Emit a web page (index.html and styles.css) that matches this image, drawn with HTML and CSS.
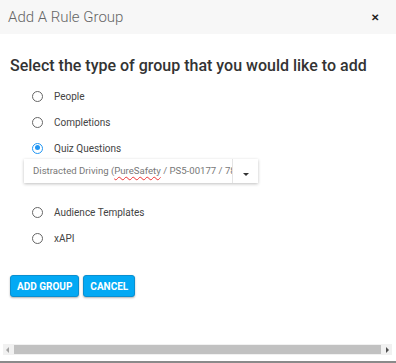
FILE: index.html
```html
<!DOCTYPE html>
<html lang="en">

<head>
    <meta charset="UTF-8">
    <meta name="viewport" content="width=device-width, initial-scale=1.0">
    <title>Add A Rule Group</title>
    <link rel="stylesheet" href="styles.css">
</head>

<body>
    <div class="dialog">
        <div class="dialog-head">
            <span class="dialog-title">Add A Rule Group</span>
            <span class="close">&#10005;</span>
        </div>
        <div class="dialog-body">
            <h2 class="question">Select the type of group that you would like to add</h2>
            <ul class="options">
                <li class="option"><span class="radio"></span>People</li>
                <li class="option"><span class="radio"></span>Completions</li>
                <li class="option"><span class="radio checked"></span>Quiz Questions</li>
            </ul>
            <div class="picker">
                <div class="picker-value">Distracted Driving (<span class="typo">PureSafety</span> / PS5-00177 / 78</div>
                <div class="picker-toggle"><span class="caret"></span></div>
            </div>
            <ul class="options lower">
                <li class="option"><span class="radio"></span>Audience Templates</li>
                <li class="option"><span class="radio"></span>xAPI</li>
            </ul>
            <div class="actions">
                <button class="btn">ADD GROUP</button>
                <button class="btn">CANCEL</button>
            </div>
        </div>
        <div class="hscroll">
            <span class="arrow left"></span>
            <span class="thumb"></span>
            <span class="arrow right"></span>
        </div>
    </div>
</body>

</html>
```

FILE: styles.css
```css
* {
    padding: 0;
    margin: 0;
    box-sizing: border-box;
}

body {
    background: #fff;
    font-family: Roboto, "Liberation Sans", sans-serif;
    width: 396px;
    height: 363px;
    overflow: hidden;
}

.dialog {
    height: 363px;
    display: flex;
    flex-direction: column;
    border-bottom: 2px solid #8a8a8a;
}

.dialog-head {
    height: 34px;
    background: #f7f7f7;
    display: flex;
    align-items: center;
    justify-content: space-between;
    padding: 0 17px 0 8px;
}

.dialog-title {
    font-size: 15px;
    font-weight: 300;
    color: #666;
}

.close {
    font-size: 10px;
    font-weight: bold;
    color: #222;
}

.dialog-body {
    flex: 1;
    padding: 21px 0 0 10px;
}

.question {
    font-size: 16px;
    font-weight: 500;
    color: #333;
    line-height: 22px;
    margin-bottom: 6px;
    white-space: nowrap;
}

.options {
    list-style: none;
    padding-left: 22px;
}

.option {
    height: 26px;
    display: flex;
    align-items: center;
    font-size: 10px;
    color: #444;
}

.radio {
    width: 11px;
    height: 11px;
    border: 1.5px solid #666;
    border-radius: 50%;
    margin-right: 11px;
    position: relative;
}

.radio.checked {
    border-color: #2196f3;
}

.radio.checked::after {
    content: "";
    position: absolute;
    left: 1.5px;
    top: 1.5px;
    width: 5px;
    height: 5px;
    border-radius: 50%;
    background: #2196f3;
}

.picker {
    margin: -2px 0 0 14px;
    width: 234px;
    height: 24px;
    display: flex;
    box-shadow: 0 1px 3px rgba(0, 0, 0, 0.25);
    background: #fff;
}

.picker-value {
    flex: 1;
    padding: 0 0 0 9px;
    font-size: 9.6px;
    color: #777;
    line-height: 24px;
    white-space: nowrap;
    overflow: hidden;
    border-right: 1px solid #e4e4e4;
}

.typo {
    text-decoration: underline wavy #e33;
    text-decoration-thickness: 1px;
    text-underline-offset: 2px;
}

.picker-toggle {
    width: 25px;
    display: flex;
    align-items: flex-end;
    justify-content: center;
    padding-bottom: 7px;
}

.caret {
    width: 0;
    height: 0;
    border-left: 3px solid transparent;
    border-right: 3px solid transparent;
    border-top: 3px solid #333;
}

.lower {
    margin-top: 16px;
}

.actions {
    margin-top: 24px;
    display: flex;
    gap: 4px;
}

.btn {
    height: 22px;
    padding: 0 6px;
    background: #03a9f4;
    color: #fff;
    border: 1px solid #0a8fd0;
    border-radius: 3px;
    font: bold 10px Roboto, "Liberation Sans", sans-serif;
    box-shadow: 0 1px 2px rgba(0, 0, 0, 0.3);
}

.hscroll {
    margin: 0 4px 6px 3px;
    height: 11px;
    background: #f1f1f1;
    display: flex;
    align-items: center;
    padding: 0 3px;
}

.thumb {
    flex: 1;
    height: 9px;
    background: #c1c1c1;
    margin: 0 5px;
}

.arrow {
    width: 0;
    height: 0;
    border-top: 3px solid transparent;
    border-bottom: 3px solid transparent;
}

.arrow.left {
    border-right: 3px solid #a3a3a3;
}

.arrow.right {
    border-left: 3px solid #505050;
}
```
